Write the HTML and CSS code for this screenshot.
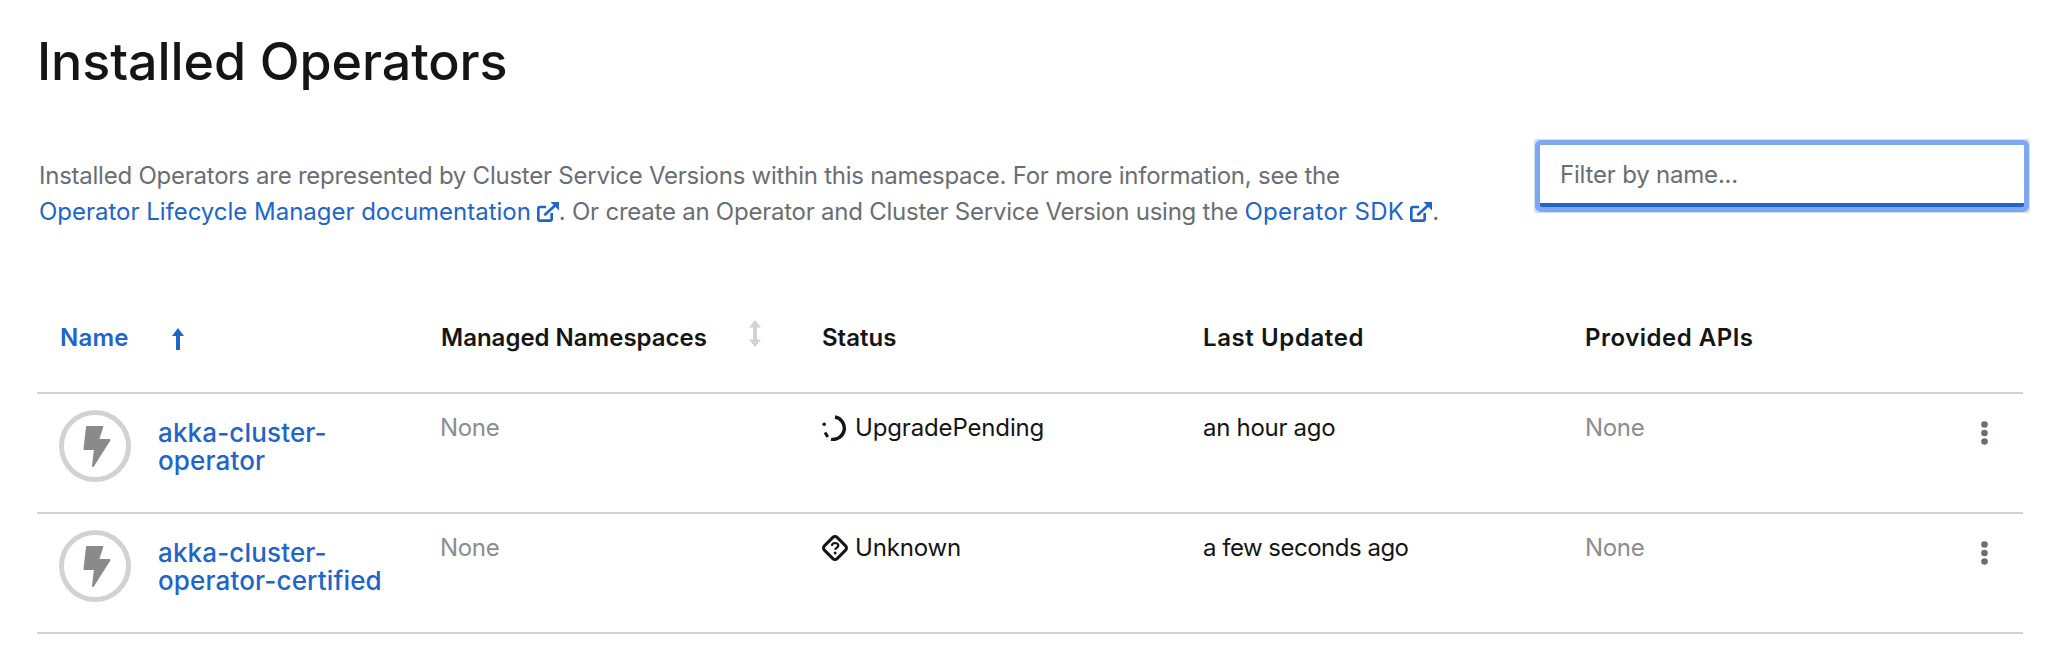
FILE: index.html
```html
<!DOCTYPE html>
<html lang="en">
<head>
<meta charset="utf-8">
<title>Installed Operators</title>
<link rel="stylesheet" href="styles.css">
</head>
<body>
<main class="page">
  <h1 class="title">Installed Operators</h1>
  <section class="intro">
    <p class="desc">Installed Operators are represented by Cluster Service Versions within this namespace. For more information, see the<br>
      <a class="link" href="#">Operator Lifecycle Manager documentation<svg class="ext" viewBox="0 0 22 20"><path d="M9 5H3A1.700 1.700 0 0 0 1.300 6.700V17A1.700 1.700 0 0 0 3 18.700H13A1.700 1.700 0 0 0 14.700 17V11M7.300 13.300 18 3.500" fill="none" stroke="currentColor" stroke-width="2.700"/><path d="M13.500 0H22V8.500Z" fill="currentColor"/></svg></a>. Or create an Operator and Cluster Service Version using the <a class="link sdk" href="#">Operator SDK<svg class="ext" viewBox="0 0 22 20"><path d="M9 5H3A1.700 1.700 0 0 0 1.300 6.700V17A1.700 1.700 0 0 0 3 18.700H13A1.700 1.700 0 0 0 14.700 17V11M7.300 13.300 18 3.500" fill="none" stroke="currentColor" stroke-width="2.700"/><path d="M13.500 0H22V8.500Z" fill="currentColor"/></svg></a>.</p>
    <input class="filter" type="text" placeholder="Filter by name...">
  </section>
  <table class="table">
    <thead>
      <tr>
        <th class="active"><span class="th-in"><span class="th-name">Name</span><svg class="arrow" viewBox="0 0 12 22"><path d="M6 0 12 8H8V22H4V8H0Z" fill="currentColor"/></svg></span></th>
        <th><span class="th-in"><span class="th-ns">Managed Namespaces</span><svg class="sort" viewBox="0 0 12 27"><path d="M6 0 12 7.500H8V19.500H12L6 27 0 19.500H4V7.500H0Z" fill="currentColor"/></svg></span></th>
        <th>Status</th>
        <th class="wide">Last Updated</th>
        <th class="wide end">Provided APIs</th>
      </tr>
    </thead>
    <tbody>
      <tr>
        <td>
          <div class="op">
            <svg class="logo" viewBox="0 0 72 72"><circle cx="36" cy="36" r="33.500" fill="none" stroke="#d2d2d2" stroke-width="5"/><path d="M28 17H43.300L39 30H50.500L34 56 36 39H25.500Z" fill="#8a8a8a" stroke="#8a8a8a" stroke-width="2" stroke-linejoin="round"/></svg>
            <a class="op-name" href="#">akka-cluster-<br>operator</a>
          </div>
        </td>
        <td class="muted ns">None</td>
        <td><span class="status"><svg class="st-icon" viewBox="0 0 26 26"><path d="M13 2A11 11 0 1 1 9 24.300" fill="none" stroke="#151515" stroke-width="3.400"/><circle cx="2.200" cy="9.200" r="1.800" fill="#151515"/><path d="M3 17.500 5.800 22" fill="none" stroke="#151515" stroke-width="3"/></svg>UpgradePending</span></td>
        <td>an hour ago</td>
        <td class="muted last">None<svg class="kebab" viewBox="0 0 7 24"><circle cx="3.500" cy="3.500" r="3.300"/><circle cx="3.500" cy="12" r="3.300"/><circle cx="3.500" cy="20.500" r="3.300"/></svg></td>
      </tr>
      <tr>
        <td>
          <div class="op">
            <svg class="logo" viewBox="0 0 72 72"><circle cx="36" cy="36" r="33.500" fill="none" stroke="#d2d2d2" stroke-width="5"/><path d="M28 17H43.300L39 30H50.500L34 56 36 39H25.500Z" fill="#8a8a8a" stroke="#8a8a8a" stroke-width="2" stroke-linejoin="round"/></svg>
            <a class="op-name" href="#">akka-cluster-<br>operator-certified</a>
          </div>
        </td>
        <td class="muted ns">None</td>
        <td><span class="status"><svg class="st-icon" viewBox="0 0 26 26"><rect x="4" y="4" width="18" height="18" rx="3" transform="rotate(45 13 13)" fill="none" stroke="#151515" stroke-width="3"/><path d="M9.800 10.800C10 8.800 11.400 8 13.100 8 15 8 16.300 9.100 16.300 10.700 16.300 12.700 13.200 12.800 13.200 14.800" fill="none" stroke="#151515" stroke-width="2.200"/><circle cx="13.200" cy="18" r="1.500" fill="#151515"/></svg>Unknown</span></td>
        <td class="tight">a few seconds ago</td>
        <td class="muted last">None<svg class="kebab" viewBox="0 0 7 24"><circle cx="3.500" cy="3.500" r="3.300"/><circle cx="3.500" cy="12" r="3.300"/><circle cx="3.500" cy="20.500" r="3.300"/></svg></td>
      </tr>
    </tbody>
  </table>
</main>
</body>
</html>
```
FILE: styles.css
```css
* { box-sizing: border-box; }
html, body { margin: 0; padding: 0; background: #fff; }
body { font-family: Inter, "Noto Sans", sans-serif; color: #151515; font-size: 24px; }
.page { padding: 0 34px 0 37px; }
.title { margin: 0; padding-top: 31px; font-size: 52px; line-height: 62px; font-weight: 500; letter-spacing: -0.1px; }
.intro { display: flex; justify-content: space-between; align-items: flex-start; margin-top: 45px; padding-left: 2px; }
.desc { margin: 0; padding-top: 20px; font-size: 24px; line-height: 36px; color: #6a6e73; letter-spacing: -0.24px; }
.link { color: #2065c7; text-decoration: none; letter-spacing: -0.02px; }
.sdk { letter-spacing: 0.3px; }
.ext { width: 22px; height: 20px; margin-left: 6px; vertical-align: -2px; }
.filter { width: 484px; height: 62px; margin: 7px 0 0 0; padding: 0 20px; border: 0; border-bottom: 4px solid #2065c7; outline: 5px solid #7da7ee; font: inherit; letter-spacing: -0.2px; color: #151515; box-shadow: 0 0 0 6px #cfdefa; border-radius: 1px; }
.filter::placeholder { color: #6a6e73; opacity: 1; }
.table { width: 1986px; margin-top: 62px; border-collapse: collapse; table-layout: fixed; }
th { width: 381px; height: 101px; padding: 0 0 9px 23px; text-align: left; font-size: 24px; font-weight: 600; vertical-align: middle; }
th:last-child { width: auto; }
.wide { letter-spacing: 0.6px; }
.end { padding-left: 24px; letter-spacing: 0.5px; }
.th-in { display: inline-flex; align-items: center; }
thead tr { border-bottom: 2px solid #d2d2d2; }
tbody tr { height: 120px; border-bottom: 2px solid #d2d2d2; }
td { padding: 16px 0 0 23px; vertical-align: top; font-size: 24px; line-height: 36px; letter-spacing: -0.3px; }
.active { color: #2065c7; letter-spacing: 0.2px; }
.th-name { display: inline-block; width: 110px; }
.th-ns { display: inline-block; width: 308px; }
.arrow { width: 12px; height: 22px; margin: 2px 0 0 2px; }
.sort { width: 12px; height: 27px; color: #d2d2d2; margin-bottom: 9px; }
.muted { color: #8a8d90; }
.ns { padding-left: 22px; }
.tight { letter-spacing: -0.5px; }
.op { display: flex; align-items: flex-start; gap: 27px; margin-left: -1px; }
.logo { width: 72px; height: 72px; flex: none; }
.op-name { color: #2065c7; text-decoration: none; font-size: 26px; line-height: 28px; font-weight: 500; padding-top: 9px; letter-spacing: 0.15px; }
.status { display: flex; align-items: center; gap: 7px; letter-spacing: -0.15px; }
.st-icon { width: 26px; height: 26px; flex: none; }
.last { display: flex; justify-content: space-between; align-items: flex-start; padding: 16px 35px 0 24px; height: 118px; }
.kebab { width: 7px; height: 24px; fill: #6a6e73; margin-top: 11px; }
```
